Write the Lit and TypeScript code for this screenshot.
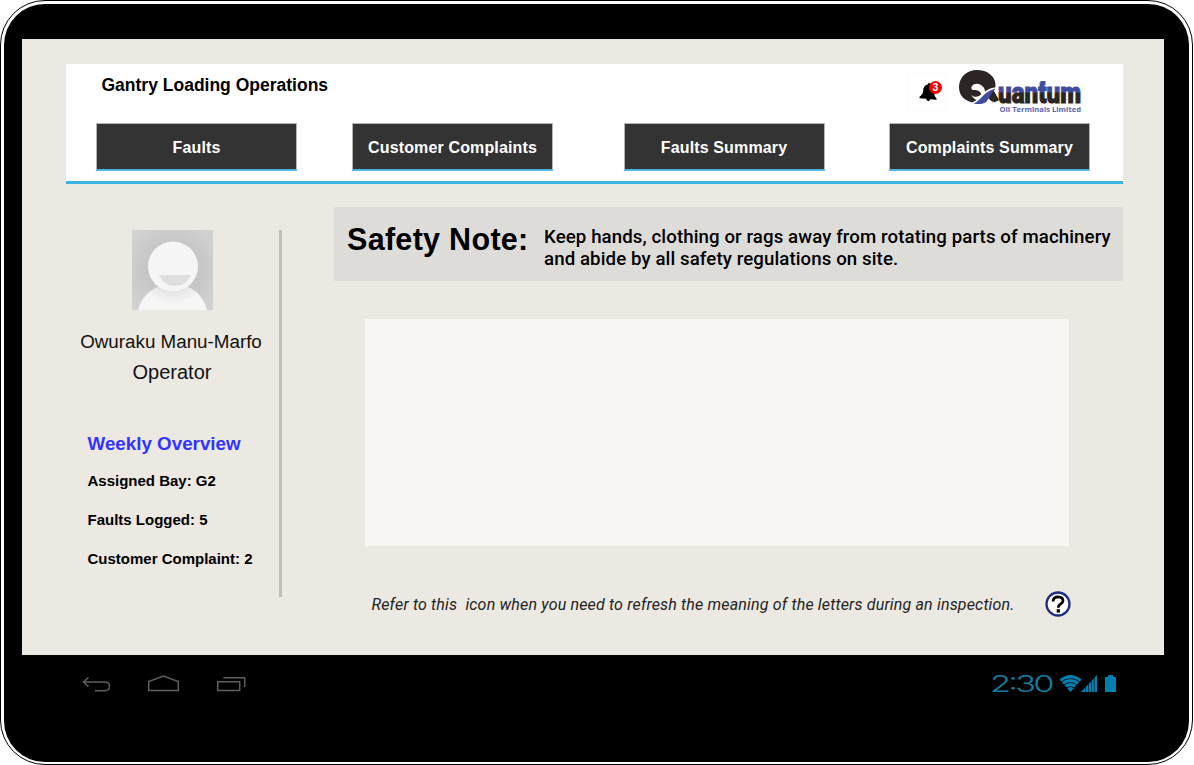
import { LitElement, html, css } from "lit";
import { customElement, property } from "lit/decorators.js";

@customElement("brand-logo")
export class BrandLogo extends LitElement {
  static styles = css`
    :host { display: block; width: 126px; height: 48px; }
    svg { display: block; overflow: visible; }
    .word { font: 900 29px "Roboto", "Liberation Sans", sans-serif; stroke-width: 1.100; }
    .sub { font: bold 7.500px "Open Sans", "Liberation Sans", sans-serif; fill: #5a63ae; }
  `;
  render() {
    return html`
      <svg width="126" height="48" viewBox="0 0 126 48">
        <defs>
          <linearGradient id="ink" gradientUnits="userSpaceOnUse" x1="0" y1="11" x2="0" y2="36">
            <stop offset="0.46" stop-color="#3f4c9f"></stop>
            <stop offset="0.54" stop-color="#2b2523"></stop>
          </linearGradient>
        </defs>
        <path fill="#2b2523" d="M19 1C29 1 37.500 7 37.500 16c0 2.500-1 4-1.500 6l5 9c-4 3-8 3-12 1-3 2-7 3-11 2C7 33 1 27 1 18 1 8 9 1 19 1Z"></path>
        <path fill="#fff" d="M13.500 18C15 14.500 19 14 22 15.500c4 2 5.500 5 5 9l-3 2.500c-1-4.500-4-6.500-9.500-6-1-1-1.500-2-1-3Z"></path>
        <path fill="#fff" d="M13.500 26C21 33 27 17.500 38 18.500c-4 3-6 6-8 9 1 3 3 5 6 5.500-4 1.500-7 1-9-1.500C23 35 18 35.500 13.500 34l5-3c-2-1-4-2.500-5-5Z"></path>
        <path fill="#3f4c9f" d="M15.500 34.500C23 32 27 20.500 37.500 20c-4 3-5 8-9 12.500-3 3-8.500 3-13 2Z"></path>
        <text class="word" x="40" y="34" textLength="83" lengthAdjust="spacingAndGlyphs" fill="url(#ink)" stroke="url(#ink)">uantum</text>
        <rect x="82.500" y="12" width="5" height="4" fill="#3f4c9f"></rect>
        <text class="sub" x="41.500" y="42.500" textLength="81.500" lengthAdjust="spacingAndGlyphs">Oil Terminals Limited</text>
      </svg>`;
  }
}

@customElement("alert-bell")
export class AlertBell extends LitElement {
  @property({ type: Number }) count = 0;
  static styles = css`
    :host { display: block; position: relative; width: 36px; height: 38px; border: 1px solid #fcfcfc; }
    .bell { position: absolute; left: 10px; top: 9px; transform: rotate(5deg); }
    .badge {
      position: absolute; left: 20px; top: 8px; width: 13px; height: 13px; border-radius: 50%;
      background: #f00; color: #fff; text-align: center;
      font: bold 10.500px/13px "Liberation Sans", sans-serif;
    }
  `;
  render() {
    return html`
      <svg class="bell" width="20" height="21" viewBox="0 0 20 21">
        <path d="M9.500 1a1.500 1.500 0 0 0-1.500 1.700C5 3.500 4 6 4 9c0 3-.5 4-3 6.500V17h6.800c.2 1.300 1 2 2 2s1.800-.7 2-2H18v-1.500C15.500 13.500 15.500 12 15.500 9c0-3-1.500-5.500-4.500-6.300A1.500 1.500 0 0 0 9.500 1Z"></path>
      </svg>
      <span class="badge">${this.count}</span>`;
  }
}

@customElement("user-panel")
export class UserPanel extends LitElement {
  static styles = css`
    :host { display: block; box-sizing: border-box; width: 215.500px; height: 367px; border-right: 3px solid #bfbfbf; }
    .avatar { display: block; margin-left: 66px; }
    .person { margin-top: 17px; width: 210px; text-align: center; line-height: 30px; color: #111; }
    .name { font-size: 18.800px; }
    .role { font-size: 20px; padding-left: 2px; }
    .overview { margin-top: 41px; padding-left: 21.500px; }
    .heading { font-weight: bold; font-size: 18.800px; line-height: 32px; color: #3333ff; }
    .stat { font-weight: bold; font-size: 15px; line-height: 39px; color: #000; }
    .stats { margin-top: 1px; }
  `;
  stats = ["Assigned Bay: G2", "Faults Logged: 5", "Customer Complaint: 2"];
  render() {
    return html`
      <svg class="avatar" width="81" height="80" viewBox="0 0 81 80">
        <defs>
          <radialGradient id="bg" cx="0.5" cy="0.5" r="0.6">
            <stop offset="0.55" stop-color="#c6c6c6"></stop>
            <stop offset="1" stop-color="#d1d1d1"></stop>
          </radialGradient>
          <radialGradient id="shade" gradientUnits="userSpaceOnUse" cx="41" cy="38" r="36">
            <stop offset="0.65" stop-color="#e4e4e4"></stop>
            <stop offset="1" stop-color="#f6f6f6"></stop>
          </radialGradient>
        </defs>
        <rect width="81" height="80" fill="url(#bg)"></rect>
        <path d="M6 80C10 64 24 54 41 54s30 10 34 26Z" fill="url(#shade)"></path>
        <circle cx="41" cy="36.500" r="25" fill="#f5f5f5"></circle>
        <path d="M27 45h32c-3 7-9 11-16 11s-13-4-16-11Z" fill="#dedede"></path>
      </svg>
      <div class="person">
        <div class="name">Owuraku Manu-Marfo</div>
        <div class="role">Operator</div>
      </div>
      <div class="overview">
        <div class="heading">Weekly Overview</div>
        <div class="stats">${this.stats.map((s) => html`<div class="stat">${s}</div>`)}</div>
      </div>`;
  }
}

@customElement("system-bar")
export class SystemBar extends LitElement {
  static styles = css`
    :host { display: flex; justify-content: space-between; align-items: flex-start; height: 40px; padding: 13px 46.500px 0 58px; }
    svg { display: block; overflow: visible; }
  `;
  render() {
    return html`
      <svg width="170" height="28" viewBox="80 668 170 28" fill="none" stroke="#5e5e5e" stroke-width="1.500">
        <path d="M88.500 677.500 83.500 682l5 4.500M83.500 682h21q5 0 5 4.500t-5 4.200H95"></path>
        <path d="M148.700 690.500v-9l14.800-5.500 14.800 5.500v9Z"></path>
        <path d="M217.700 681.700h22v8.800h-22ZM223.500 677.800h21.200v9.200"></path>
      </svg>
      <svg width="130" height="28" viewBox="988 668 130 28">
        <g transform="translate(989 692) scale(1.5 1)">
          <text x="0" y="0" textLength="43" lengthAdjust="spacing" fill="#147da6" font-family="Inter, sans-serif" font-weight="300" font-size="23">2:30</text>
        </g>
        <path fill="#0080ae" d="M1058.500 679.500q11-9 22 0L1069.500 692Z"></path>
        <path fill="none" stroke="#000" stroke-width="0.800" d="M1060 682q9.500-7 19 0M1062.500 685q7-5 14 0M1065 688q4.500-3 9 0"></path>
        <path fill="#0080ae" d="M1080 692 1096 675v17Z"></path>
        <path stroke="#000" stroke-width="0.600" d="M1084.500 680v12M1087.500 678v14M1090.500 676v16M1093.300 674v18"></path>
        <path fill="#0080ae" d="M1104 677h3v-2h5v2h3v15h-11Z"></path>
      </svg>`;
  }
}

@customElement("app-root")
export class AppRoot extends LitElement {
  static styles = css`
    :host { display: block; width: 1194px; height: 765px; overflow: hidden; background: #fff; font-family: "Liberation Sans", Arial, sans-serif; color: #000; }
    .shell { box-sizing: border-box; width: 1193px; height: 765px; border: 1px solid #000; border-radius: 45px; padding: 3px 3px 2px 3px; background: #fff; }
    .body { box-sizing: border-box; height: 758px; background: #000; border-radius: 41px; padding: 35px 24px 0 18px; }
    .screen { box-sizing: border-box; width: 1142px; height: 616px; background: #ece9e2; padding: 25px 41px 0 44px; }
    header { box-sizing: border-box; height: 120px; background: #fff; border-bottom: 3px solid #3db3e3; }
    .top { display: flex; height: 59px; }
    .title { margin: 10px 0 0 35.500px; flex: 1; font-weight: bold; font-size: 17.500px; line-height: 22px; }
    alert-bell { margin: 8px 12px 0 0; }
    brand-logo { margin: 5px 39px 0 0; }
    nav { display: flex; padding-left: 30px; }
    .tab { box-sizing: border-box; width: 201px; height: 48px; padding: 2px 0 0; margin: 0; background: #333; border: 1px solid #b5b5b5; border-bottom: 2px solid #4cb8e2; border-radius: 0; color: #fff; font: bold 16px "Liberation Sans", sans-serif; letter-spacing: 0.140px; }
    .tab:nth-child(2) { margin-left: 55px; }
    .tab:nth-child(3) { margin-left: 70.500px; }
    .tab:nth-child(4) { margin-left: 64.500px; }
    .main { display: flex; }
    user-panel { margin-top: 46px; }
    .content { flex: 1; padding-left: 52.500px; }
    .note { display: flex; box-sizing: border-box; height: 74px; margin-top: 23px; background: #dedcd8; padding-left: 13px; }
    .note-title { font: bold 30.500px/34px "Liberation Sans", sans-serif; letter-spacing: 0.300px; margin-top: 15px; width: 197px; white-space: nowrap; }
    .note-text { margin-top: 19px; font: 500 18.670px/22px Roboto, sans-serif; letter-spacing: 0.095px; white-space: nowrap; }
    .canvas { margin: 38px 54px 0 31px; height: 227px; background: #f7f6f2; }
    .hint { display: flex; align-items: center; margin: 43px 52px 0 37.500px; height: 30px; justify-content: space-between; }
    .hint-text { padding-top: 2px; font: italic 400 16px/20px Roboto, sans-serif; letter-spacing: 0.167px; white-space: pre; color: #222; }
    .help { display: block; }
  `;
  tabs = ["Faults", "Customer Complaints", "Faults Summary", "Complaints Summary"];
  render() {
    return html`
      <div class="shell">
        <div class="body">
          <div class="screen">
            <header>
              <div class="top">
                <div class="title">Gantry Loading Operations</div>
                <alert-bell .count=${3}></alert-bell>
                <brand-logo></brand-logo>
              </div>
              <nav>${this.tabs.map((t) => html`<button class="tab">${t}</button>`)}</nav>
            </header>
            <div class="main">
              <user-panel></user-panel>
              <div class="content">
                <div class="note">
                  <div class="note-title">Safety Note:</div>
                  <div class="note-text">Keep hands, clothing or rags away from rotating parts of machinery<br>and abide by all safety regulations on site.</div>
                </div>
                <div class="canvas"></div>
                <div class="hint">
                  <span class="hint-text">Refer to this  icon when you need to refresh the meaning of the letters during an inspection.</span>
                  <svg class="help" width="26" height="26" viewBox="0 0 26 26">
                    <circle cx="13" cy="13" r="11.500" fill="#fff" stroke="#1f2f80" stroke-width="2.300"></circle>
                    <path d="M8 10.500q.3-4.700 5.200-4.700 4.800.2 4.800 3.900 0 1.900-2.400 3.300-2.300 1.300-2.300 3.700" fill="none" stroke="#000" stroke-width="2.700"></path>
                    <rect x="11.700" y="18.200" width="3.200" height="3.400"></rect>
                  </svg>
                </div>
              </div>
            </div>
          </div>
          <system-bar></system-bar>
        </div>
      </div>`;
  }
}
